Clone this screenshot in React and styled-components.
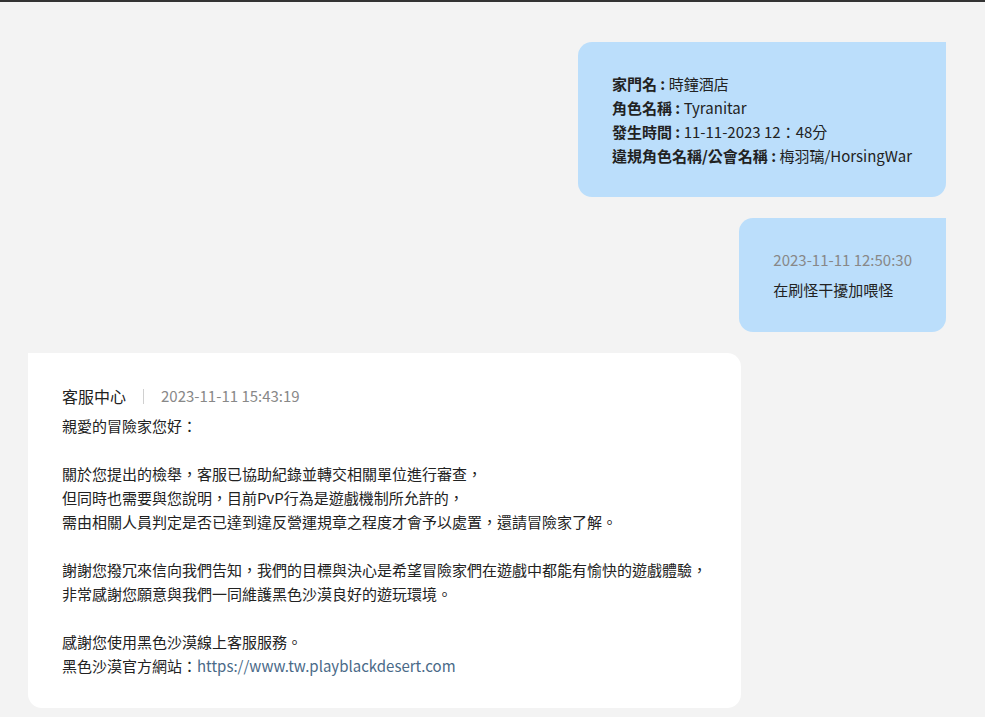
import React from 'react';
import styled, { createGlobalStyle } from 'styled-components';

const GlobalStyle = createGlobalStyle`
  body {
    margin: 0;
    background: #ffffff;
    font-family: "Noto Sans CJK TC", "Noto Sans", sans-serif;
  }
`;

const Page = styled.div`
  display: flex;
  min-height: 717px;
`;

const Thread = styled.div`
  flex: 1;
  display: flex;
  flex-direction: column;
  gap: 21px;
  padding: 40px 39px 10px 28px;
  background: #f3f3f3;
  border-top: 2px solid #333333;
`;

const Gutter = styled.div`
  width: 10px;
  background: #ffffff;
`;

const Bubble = styled.div`
  align-self: ${(p) => (p.$mine ? 'flex-end' : 'flex-start')};
  width: fit-content;
  padding: ${(p) => p.$top || 30}px 34px ${(p) => p.$bottom || 30}px;
  background: ${(p) => (p.$mine ? '#bbdefb' : '#ffffff')};
  border-radius: ${(p) => (p.$mine ? '14px 0 14px 14px' : '0 14px 14px 14px')};
  color: #222222;
  font-size: 15px;
  line-height: 24px;
  white-space: nowrap;
`;

const Field = styled.div`
  color: #222222;
`;

const Label = styled.b`
  font-weight: 700;
`;

const Stamp = styled.div`
  color: #888888;
  margin-bottom: 6px;
`;

const Header = styled.div`
  display: flex;
  align-items: center;
  gap: 17px;
  margin-bottom: 6px;
`;

const Sender = styled.span`
  font-size: 16px;
  color: #222222;
`;

const Divider = styled.span`
  width: 1px;
  height: 15px;
  background: #d0d0d0;
`;

const Time = styled.span`
  color: #888888;
`;

const Line = styled.div`
  min-height: 24px;
`;

const SiteLink = styled.a`
  color: #4a6a88;
  text-decoration: none;
`;

const fields = [
  ['家門名', '時鐘酒店'],
  ['角色名稱', 'Tyranitar'],
  ['發生時間', '11-11-2023 12：48分'],
  ['違規角色名稱/公會名稱', '梅羽璃/HorsingWar'],
];

const reply = [
  '親愛的冒險家您好：',
  '',
  '關於您提出的檢舉，客服已協助紀錄並轉交相關單位進行審查，',
  '但同時也需要與您說明，目前PvP行為是遊戲機制所允許的，',
  '需由相關人員判定是否已達到違反營運規章之程度才會予以處置，還請冒險家了解。',
  '',
  '謝謝您撥冗來信向我們告知，我們的目標與決心是希望冒險家們在遊戲中都能有愉快的遊戲體驗，',
  '非常感謝您願意與我們一同維護黑色沙漠良好的遊玩環境。',
  '',
  '感謝您使用黑色沙漠線上客服服務。',
];

export default function App() {
  return (
    <>
      <GlobalStyle />
      <Page>
        <Thread>
          <Bubble $mine $bottom={29}>
            {fields.map(([k, v]) => (
              <Field key={k}>
                <Label>{k} :</Label> {v}
              </Field>
            ))}
          </Bubble>

          <Bubble $mine>
            <Stamp>2023-11-11 12:50:30</Stamp>
            <Line>在刷怪干擾加喂怪</Line>
          </Bubble>

          <Bubble $top={31}>
            <Header>
              <Sender>客服中心</Sender>
              <Divider />
              <Time>2023-11-11 15:43:19</Time>
            </Header>
            {reply.map((t, i) => (
              <Line key={i}>{t}</Line>
            ))}
            <Line>
              黑色沙漠官方網站：
              <SiteLink href="#">https://www.tw.playblackdesert.com</SiteLink>
            </Line>
          </Bubble>
        </Thread>
        <Gutter />
      </Page>
    </>
  );
}
